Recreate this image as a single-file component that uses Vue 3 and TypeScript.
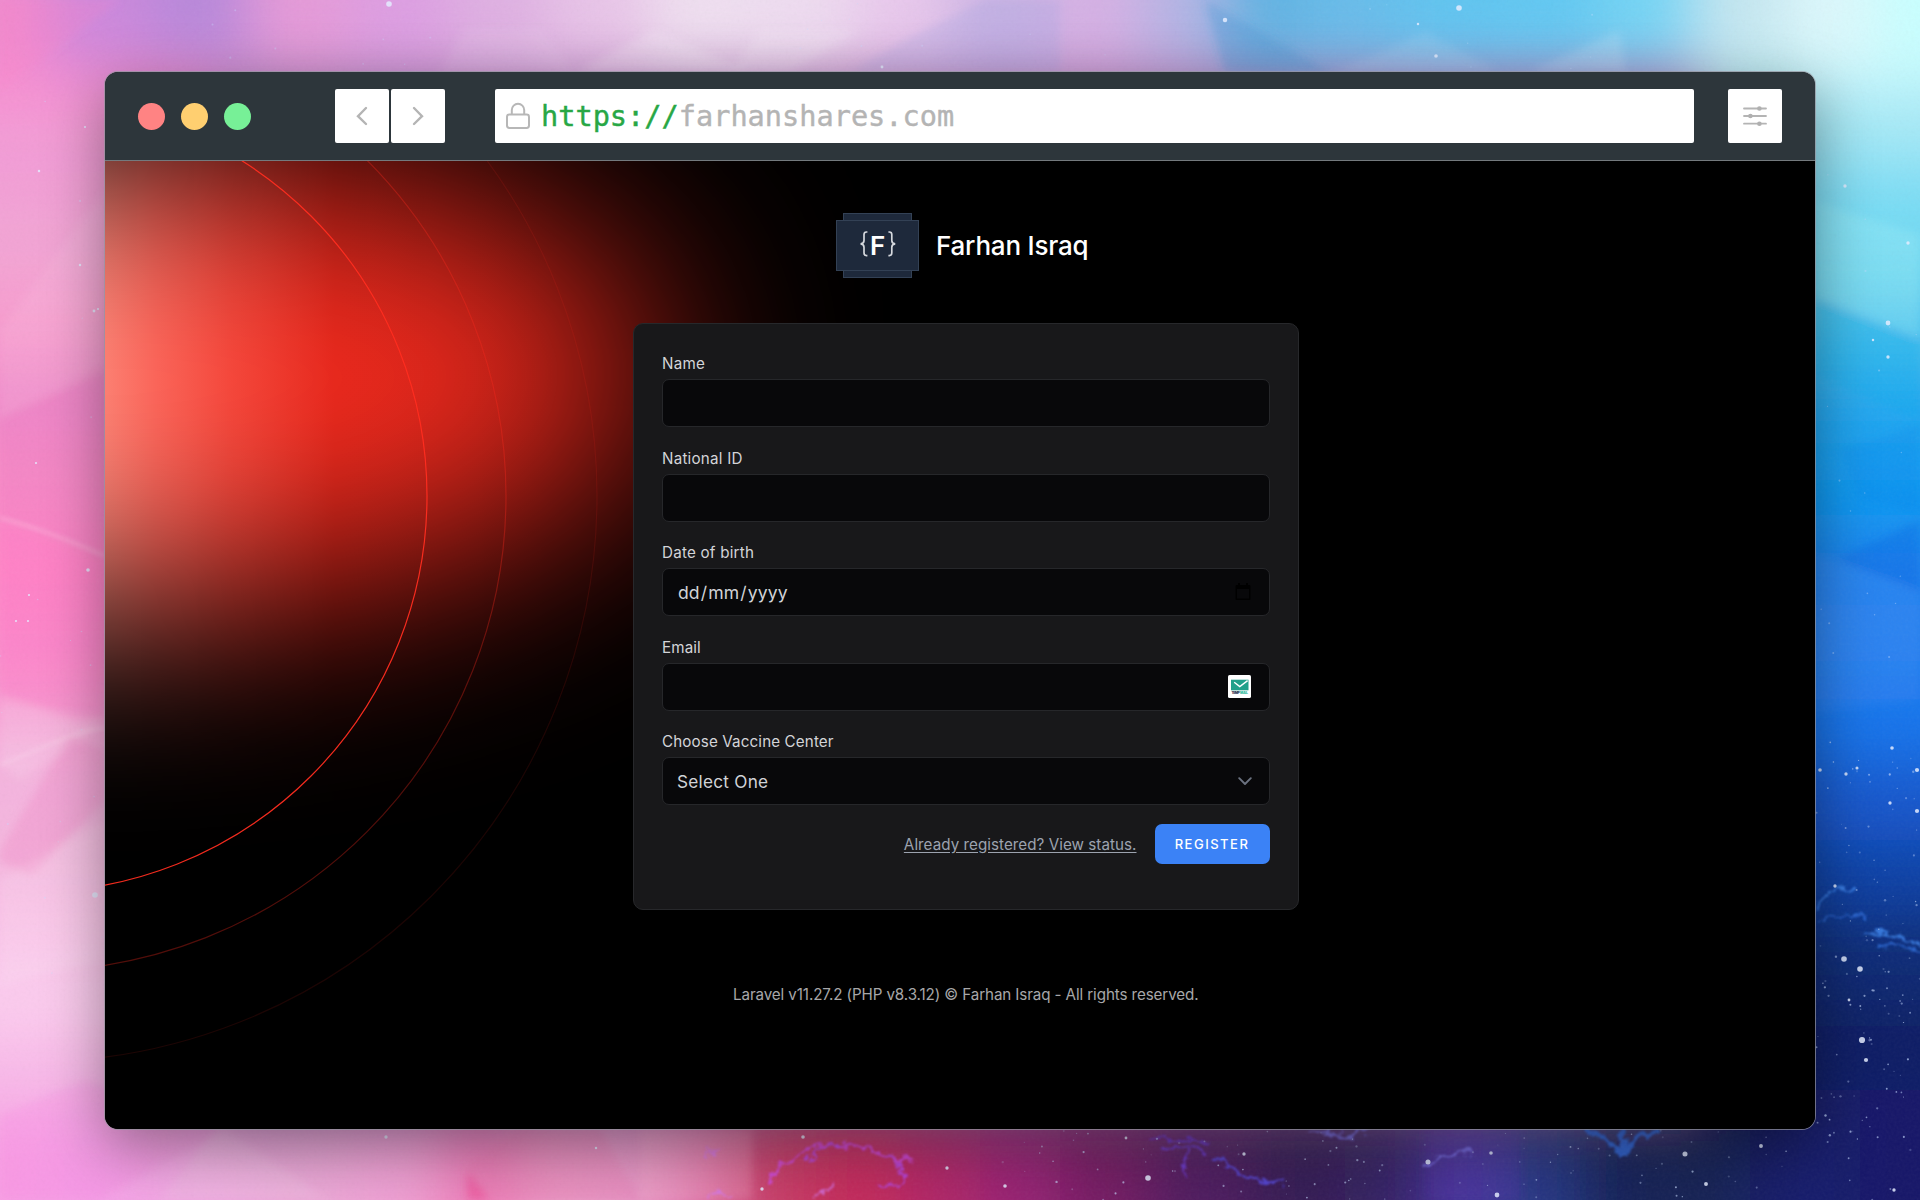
<script setup lang="ts">
interface Patch { x: number; y: number; w: number; h: number; c: string }
type Stop = [number, string]

const topStops: Stop[] = [
  [0, '#f08ace'], [100, '#cc88dc'], [200, '#b888da'], [300, '#e59ad8'], [400, '#dd9ee2'], [500, '#dfb0e2'],
  [600, '#e8c4e8'], [700, '#efdff0'], [800, '#eedcf0'], [900, '#e8c8ec'], [1000, '#ccb4e4'], [1100, '#d6b0e4'],
  [1180, '#b4b4e4'], [1260, '#62b2e2'], [1350, '#68bcea'], [1450, '#60c4f0'], [1550, '#62c8f2'],
  [1650, '#74d4f4'], [1740, '#c4e6f0'], [1830, '#dcf8fc'], [1920, '#c8ffff'],
]
const bottomStops: Stop[] = [
  [0, '#f8a0e4'], [100, '#f4a0e6'], [200, '#f0a8e0'], [300, '#eca8d8'], [400, '#f0a0d4'], [480, '#ee7cb8'],
  [560, '#ec9cc8'], [640, '#e898c8'], [700, '#e070a8'], [760, '#c83c68'], [860, '#c42c5c'], [940, '#b02868'],
  [1020, '#962474'], [1100, '#741c64'], [1200, '#501c60'], [1300, '#341c54'], [1390, '#342064'],
  [1460, '#44309a'], [1540, '#283884'], [1620, '#142458'], [1700, '#142454'], [1800, '#141c6c'], [1920, '#141468'],
]
const leftStops: Stop[] = [
  [60, '#fa8cd0'], [150, '#f29cd6'], [250, '#f2a4d4'], [320, '#f89cce'], [400, '#f08aca'], [480, '#f88cc8'],
  [560, '#ff88c8'], [640, '#fd8ccc'], [700, '#f898d0'], [760, '#f4b4de'], [850, '#f4b6de'], [920, '#f9c0e6'],
  [1000, '#fcccee'], [1080, '#f8b8e8'], [1150, '#fa9ce6'], [1220, '#f8a4e4'],
]
const rightStops: Stop[] = [
  [60, '#c4f6fc'], [130, '#a4e8f6'], [200, '#78dcf4'], [280, '#6cd6f0'], [340, '#40bcee'], [420, '#1ca4f0'],
  [500, '#1098f2'], [570, '#1a80ee'], [640, '#2480ee'], [720, '#1474ec'], [800, '#1456cc'], [880, '#1040a4'],
  [950, '#102c74'], [1050, '#101c64'], [1130, '#18146c'], [1220, '#180c60'],
]

function strip(stops: Stop[], horizontal: boolean, offset: number, depth: number): Patch[] {
  return stops.map(([p, c], i) => {
    const prev = i > 0 ? (stops[i - 1][0] + p) / 2 : p - 80
    const next = i < stops.length - 1 ? (stops[i + 1][0] + p) / 2 : p + 80
    const len = next - prev + 1
    return horizontal
      ? { x: prev, y: offset, w: len, h: depth, c }
      : { x: offset, y: prev, w: depth, h: len, c }
  })
}

const patches: Patch[] = [
  ...strip(leftStops, false, -80, 300),
  ...strip(rightStops, false, 1700, 300),
  ...strip(topStops, true, -80, 150),
  ...strip(bottomStops, true, 1115, 165),
]

let seed = 20241
function rnd(): number {
  seed = (seed * 16807) % 2147483647
  return seed / 2147483647
}

interface Star { x: number; y: number; r: number; o: number }
const stars: Star[] = []
for (let i = 0; i < 110; i++) stars.push({ x: 1000 + rnd() * 920, y: 1130 + rnd() * 70, r: 0.5 + rnd() * 0.7, o: 0.2 + rnd() * 0.5 })
for (let i = 0; i < 110; i++) stars.push({ x: 1816 + rnd() * 104, y: 740 + rnd() * 400, r: 0.5 + rnd() * 0.7, o: 0.2 + rnd() * 0.5 })
for (let i = 0; i < 20; i++) stars.push({ x: 1816 + rnd() * 104, y: 100 + rnd() * 600, r: 0.6 + rnd() * 0.5, o: 0.4 })
for (let i = 0; i < 18; i++) stars.push({ x: rnd() * 103, y: 90 + rnd() * 1080, r: 0.6 + rnd() * 0.5, o: 0.4 })
for (let i = 0; i < 24; i++) stars.push({ x: 200 + rnd() * 1400, y: rnd() * 70, r: 0.6 + rnd() * 0.5, o: 0.35 })
const bright: [number, number, number][] = [
  [1459, 8, 4], [1225, 20, 3.2], [1436, 56, 2.6], [1418, 24, 1.8], [882, 67, 2], [389, 4, 4], [95, 895, 4], [88, 570, 2.6],
  [80, 265, 1.8], [94, 311, 2], [98, 309, 1.6], [85, 127, 1.6], [39, 171, 1.8], [36, 463, 1.6], [29, 595, 1.6],
  [28, 621, 1.6], [16, 621, 1.6], [386, 1137, 2.4], [596, 1148, 1.8], [1845, 186, 2.4], [1888, 323, 3.4], [1888, 357, 2.4],
  [1908, 243, 2.4], [1873, 340, 1.8], [1892, 748, 2.6], [1846, 774, 2.4], [1857, 768, 2.2], [1820, 770, 2.6],
  [1917, 770, 3], [1890, 803, 2.4], [1917, 811, 3], [1844, 959, 4], [1860, 969, 4], [1862, 1040, 4.4], [1866, 1060, 3],
  [1835, 886, 2.4], [1849, 1000, 2], [803, 1137, 2.6], [947, 1168, 2.4], [1005, 1186, 2.6], [762, 1189, 2.4],
  [1148, 1178, 4], [1244, 1154, 2.4], [1491, 1153, 2.6], [1428, 1162, 3.6], [1685, 1154, 3.6], [1761, 1146, 2.8],
  [1706, 1184, 2.8], [1497, 1195, 3.4], [1126, 1138, 2], [1894, 1190, 2.4],
]

const facets = [
  { p: '0,0 120,0 0,90', f: '#ff80c8', o: 0.2 },
  { p: '0,330 105,190 105,365 0,420', f: '#fff', o: 0.08 },
  { p: '0,415 105,372 105,560 0,518', f: '#e050b0', o: 0.12 },
  { p: '0,520 105,560 105,718 80,725 0,694', f: '#ff58b8', o: 0.14 },
  { p: '0,700 105,722 20,780 0,765', f: '#fff', o: 0.14 },
  { p: '0,850 70,735 105,750 105,800 32,876 0,862', f: '#ee70b8', o: 0.24 },
  { p: '0,880 105,820 105,960 0,985', f: '#fff', o: 0.12 },
  { p: '0,1115 85,1080 220,1128 160,1200 0,1200', f: '#fa78e0', o: 0.2 },
  { p: '225,1130 330,1200 100,1200', f: '#fff', o: 0.1 },
  { p: '467,1170 490,1200 467,1200', f: '#f04090', o: 0.5 },
  { p: '467,1165 520,1128 600,1128 640,1200 490,1200', f: '#e878b0', o: 0.3 },
  { p: '640,1128 752,1128 752,1200 640,1200', f: '#f8b0cc', o: 0.26 },
  { p: '465,28 540,28 575,72 440,72', f: '#fff', o: 0.08 },
  { p: '655,30 750,72 575,72', f: '#fff', o: 0.2 },
  { p: '860,30 790,72 730,72 760,30', f: '#fff', o: 0.16 },
  { p: '905,40 985,0 1060,0 1060,72 850,72', f: '#a0a4e0', o: 0.24 },
  { p: '1205,0 1330,72 1225,72', f: '#3a90d0', o: 0.28 },
  { p: '1425,32 1500,72 1335,72', f: '#fff', o: 0.1 },
  { p: '1620,30 1625,72 1530,72', f: '#fff', o: 0.15 },
  { p: '1816,202 1920,235 1920,338 1816,298', f: '#b8f8f8', o: 0.2 },
  { p: '1816,298 1920,338 1920,420 1816,376', f: '#08a8ec', o: 0.24 },
  { p: '1840,450 1920,425 1920,512 1860,500', f: '#0070e8', o: 0.16 },
  { p: '1816,555 1920,592 1920,700 1816,712', f: '#68a0ff', o: 0.12 },
  { p: '1836,560 1920,520 1920,592', f: '#0450d8', o: 0.24 },
  { p: '1425,1128 1520,1128 1520,1200 1425,1200', f: '#6a40c0', o: 0.16 },
]

const wisps = [
  { d: 'M770 1186 C776 1164 800 1150 820 1146 S856 1146 880 1154 S912 1158 914 1160', c: '#d24cf0', w: 3 },
  { d: 'M806 1165 C812 1152 822 1146 838 1144 M888 1156 C896 1160 908 1170 902 1184 C898 1188 888 1184 880 1182', c: '#b84af4', w: 2.4 },
  { d: 'M708 1160 C706 1153 714 1150 720 1148 M708 1197 C716 1188 728 1194 734 1196 M816 1200 C822 1190 830 1188 834 1184', c: '#d678f0', w: 2 },
  { d: 'M1162 1152 C1180 1146 1196 1148 1206 1154 M1186 1150 C1188 1162 1180 1170 1184 1178 M1150 1136 C1166 1142 1190 1136 1210 1142', c: '#7040e0', w: 2.6 },
  { d: 'M1214 1160 C1230 1162 1232 1172 1244 1176 S1266 1180 1280 1184', c: '#5b50f4', w: 3 },
  { d: 'M1310 1130 C1330 1132 1340 1140 1366 1130 M1424 1168 C1436 1154 1450 1156 1470 1152', c: '#8078f0', w: 3 },
  { d: 'M1586 1132 C1600 1134 1612 1140 1622 1156 C1632 1142 1640 1130 1660 1132 M1622 1130 V1150', c: '#3270e8', w: 5 },
  { d: 'M1818 906 C1826 890 1842 888 1856 888 M1864 934 C1880 932 1900 936 1920 944', c: '#4088f0', w: 2.4 },
  { d: 'M1816 922 C1830 914 1850 912 1866 918 M1880 946 C1896 940 1908 950 1920 952', c: '#3070e0', w: 2.2 },
]

const veins = ['M0 765 C40 750 70 732 105 728', 'M0 518 C40 528 72 542 105 556']

const rings = [
  { r: 396, o: 0.95 },
  { r: 475, o: 0.32 },
  { r: 566, o: 0.11 },
]
</script>

<template>
  <div class="desktop">
    <svg class="wallpaper" viewBox="0 0 1920 1200" width="1920" height="1200" aria-hidden="true">
      <defs>
        <filter id="mesh" x="-5%" y="-5%" width="110%" height="110%"><feGaussianBlur stdDeviation="28" /></filter>
        <filter id="soft"><feGaussianBlur stdDeviation="4" /></filter>
        <filter id="vein" x="-20%" y="-20%" width="140%" height="140%"><feGaussianBlur stdDeviation="2" /></filter>
        <filter id="glowy" x="-20%" y="-50%" width="140%" height="200%">
          <feTurbulence type="fractalNoise" baseFrequency="0.09" numOctaves="3" seed="4" result="n" />
          <feDisplacementMap in="SourceGraphic" in2="n" scale="16" xChannelSelector="R" yChannelSelector="G" result="d" />
          <feGaussianBlur in="d" stdDeviation="1.2" />
        </filter>
        <filter id="dot" x="-50%" y="-50%" width="200%" height="200%"><feGaussianBlur stdDeviation="0.7" /></filter>
        <filter id="grain" x="0" y="0" width="100%" height="100%">
          <feTurbulence type="fractalNoise" baseFrequency="0.35" numOctaves="2" seed="8" />
          <feColorMatrix type="saturate" values="0" />
        </filter>
      </defs>
      <rect width="1920" height="1200" fill="#c890d0" />
      <g filter="url(#mesh)">
        <rect v-for="(p, i) in patches" :key="i" :x="p.x" :y="p.y" :width="p.w" :height="p.h" :fill="p.c" />
      </g>
      <g filter="url(#soft)">
        <polygon v-for="(f, i) in facets" :key="i" :points="f.p" :fill="f.f" :fill-opacity="f.o" />
      </g>
      <g filter="url(#vein)" fill="none" stroke="#ffeaf6" stroke-width="3" stroke-opacity="0.28">
        <path v-for="d in veins" :key="d" :d="d" />
      </g>
      <g filter="url(#glowy)" fill="none" stroke-linecap="round">
        <path v-for="(w, i) in wisps" :key="i" :d="w.d" :stroke="w.c" :stroke-width="w.w" stroke-opacity="0.8" />
      </g>
      <rect width="1920" height="1200" filter="url(#grain)" opacity="0.05" />
      <g filter="url(#dot)">
        <circle v-for="(s, i) in stars" :key="i" :cx="s.x" :cy="s.y" :r="s.r" :fill-opacity="s.o" fill="#c9dcff" />
        <circle v-for="(b, i) in bright" :key="'b' + i" :cx="b[0]" :cy="b[1]" :r="b[2] * 0.7" fill="#e4ecff" fill-opacity="0.85" />
      </g>
    </svg>

    <main class="window">
      <header class="toolbar">
        <div class="lights"><i class="red"></i><i class="amber"></i><i class="green"></i></div>
        <div class="nav">
          <button type="button" aria-label="Back">
            <svg width="54" height="54" viewBox="0 0 54 54"><path d="M31 19 L23 27.2 L31 35" /></svg>
          </button>
          <button type="button" aria-label="Forward">
            <svg width="54" height="54" viewBox="0 0 54 54"><path d="M23 19 L31 27.2 L23 35" /></svg>
          </button>
        </div>
        <div class="address">
          <svg width="26" height="28" viewBox="0 0 26 28">
            <rect x="2" y="12.6" width="22" height="13.4" rx="2.4" />
            <path d="M6.8 12.6 V8 a6.2 6.2 0 0 1 12.4 0 V12.6" />
          </svg>
          <span class="url"><b>https://</b>farhanshares.com</span>
        </div>
        <button class="settings" type="button" aria-label="Settings">
          <svg width="54" height="54" viewBox="0 0 54 54">
            <path d="M16 19.5 H38 M16 27 H38 M16 34.7 H38" />
            <circle cx="31.4" cy="19.5" r="2.3" /><circle cx="22.4" cy="27" r="2.3" /><circle cx="31.4" cy="34.7" r="2.3" />
          </svg>
        </button>
      </header>

      <section class="page">
        <svg class="aurora" width="800" height="968" viewBox="105 161 800 968" aria-hidden="true">
          <defs>
            <linearGradient id="heat" gradientUnits="userSpaceOnUse" x1="90" y1="0" x2="560" y2="0">
              <stop offset="0" stop-color="#ff887a" />
              <stop offset="0.14" stop-color="#fd665a" />
              <stop offset="0.3" stop-color="#f8483c" />
              <stop offset="0.52" stop-color="#ee2a1e" />
              <stop offset="1" stop-color="#ec281c" />
            </linearGradient>
            <filter id="haze" filterUnits="userSpaceOnUse" x="-900" y="-400" width="2200" height="1700">
              <feGaussianBlur stdDeviation="104 102" />
            </filter>
            <mask id="cloud" maskUnits="userSpaceOnUse" x="0" y="100" width="1100" height="1100" style="mask-type: alpha">
              <ellipse cx="110" cy="382" rx="545" ry="228" fill="#fff" filter="url(#haze)" transform="rotate(-1 110 382)" />
            </mask>
          </defs>
          <rect x="100" y="150" width="950" height="1000" fill="url(#heat)" mask="url(#cloud)" />
          <circle v-for="ring in rings" :key="ring.r" cx="31" cy="496" :r="ring.r" fill="none" stroke="#ff2d20" stroke-width="1.2" :stroke-opacity="ring.o" />
        </svg>

        <div class="column">
          <div class="brand">
            <svg width="84" height="66" viewBox="0 0 84 66">
              <rect x="7.5" y="0.5" width="68" height="64" fill="#1e293b" stroke="#334155" />
              <rect x="0.5" y="7.5" width="82" height="50" fill="#1e293b" stroke="#334155" />
              <g fill="none" stroke="#d5d8dd" stroke-width="1.7">
                <path d="M31.4 19 H30.4 Q28 19 28 21.6 V27.4 Q28 30.4 24.6 30.8 Q28 31.2 28 34.2 V40 Q28 42.6 30.4 42.6 H31.4" />
                <path d="M52.4 19 H53.4 Q55.8 19 55.8 21.6 V27.4 Q55.8 30.4 59.2 30.8 Q55.8 31.2 55.8 34.2 V40 Q55.8 42.6 53.4 42.6 H52.4" />
              </g>
              <text x="34" y="42" class="mark">F</text>
            </svg>
            <h1>Farhan Israq</h1>
          </div>

          <form class="card" @submit.prevent>
            <div class="row"><label class="l-short">Name</label><div class="field"></div></div>
            <div class="row"><label class="l-short">National ID</label><div class="field"></div></div>
            <div class="row">
              <label class="l-short">Date of birth</label>
              <div class="field">
                <span class="date">dd<em>/</em>mm<em>/</em>yyyy</span>
                <svg class="calendar" width="16" height="18" viewBox="0 0 16 18">
                  <path fill="#000" fill-rule="evenodd" d="M3 0h2v2h6V0h2v2h1.4Q15.5 2 15.5 3.4V16Q15.5 17 14.4 17H1.6Q.5 17 .5 16V3.4Q.5 2 1.6 2H3zM2 6V15.4H14V6z" />
                </svg>
              </div>
            </div>
            <div class="row">
              <label>Email</label>
              <div class="field">
                <svg class="tempmail" width="23" height="23" viewBox="0 0 23 23">
                  <rect width="23" height="23" rx="1.6" fill="#fff" />
                  <rect x="3" y="4.7" width="17.5" height="10.6" fill="#22a08a" />
                  <path d="M6.2 7.2 L11.8 11.6 L19.6 5.6" fill="none" stroke="#fff" stroke-width="1.4" />
                  <text x="3.4" y="18.6" class="tiny" textLength="8.4" fill="#1b2a4a">TEMP</text>
                  <text x="12" y="18.6" class="tiny" textLength="8" fill="#22b89a">MAIL</text>
                </svg>
              </div>
            </div>
            <div class="row">
              <label>Choose Vaccine Center</label>
              <div class="field">
                <span class="select">Select One</span>
                <svg class="chevron" width="14" height="9" viewBox="0 0 14 9"><path d="M1.2 1.2 L7 7 L12.8 1.2" /></svg>
              </div>
            </div>
            <div class="actions">
              <a>Already registered? View status.</a>
              <button class="register" type="submit">REGISTER</button>
            </div>
          </form>

          <footer><span>Laravel v11.27.2 (PHP v8.3.12) © Farhan Israq - All rights reserved.</span></footer>
        </div>
      </section>
    </main>
  </div>
</template>

<style>
body {
  margin: 0;
  overflow: hidden;
}
</style>

<style scoped>
.desktop {
  box-sizing: border-box;
  position: relative;
  width: 1920px;
  height: 1200px;
  padding: 71px 104px 0;
  overflow: hidden;
  font-family: Inter, "Liberation Sans", sans-serif;
}
.wallpaper {
  position: absolute;
  inset: 0;
}
.window {
  position: relative;
  box-sizing: border-box;
  height: 1059px;
  border: 1px solid rgba(150, 150, 160, 0.7);
  border-radius: 14px;
  overflow: hidden;
  background: #000;
  background-clip: padding-box;
  box-shadow: 0 18px 60px rgba(0, 0, 0, 0.4);
}
.toolbar {
  box-sizing: border-box;
  display: flex;
  align-items: center;
  height: 89px;
  padding: 0 33px;
  border-bottom: 1px solid #747a7e;
  background: #2d363b;
}
button {
  border: 0;
  padding: 0;
  font: inherit;
}
.lights {
  display: flex;
  gap: 15.8px;
  width: 197px;
}
.lights i {
  width: 27px;
  height: 27px;
  border-radius: 50%;
}
.red { background: #ff8383; }
.amber { background: #ffcf70; }
.green { background: #77f097; }
.nav {
  display: flex;
  gap: 2px;
  margin-right: 50px;
}
.nav button,
.settings {
  display: block;
  width: 54px;
  height: 54px;
  border-radius: 2px;
  background: #fff;
}
.nav svg,
.settings svg {
  display: block;
}
.nav path {
  fill: none;
  stroke: #b4b4b4;
  stroke-width: 2.4;
  stroke-linecap: round;
}
.address {
  box-sizing: border-box;
  display: flex;
  align-items: center;
  flex: 1;
  height: 54px;
  margin-right: 34px;
  padding-left: 10px;
  border-radius: 2px;
  background: #fff;
}
.address svg {
  fill: none;
  stroke: #b7b7b7;
  stroke-width: 2;
}
.url {
  margin-left: 10px;
  color: #b4b4b4;
  font: 28.6px/54px "DejaVu Sans Mono", monospace;
  -webkit-text-stroke: 0.4px currentColor;
}
.url b {
  color: #28a745;
  font-weight: 400;
}
.settings path {
  stroke: #b4b4b4;
  stroke-width: 1.8;
  stroke-linecap: round;
}
.settings circle {
  fill: #b0b0b0;
}
.page {
  position: relative;
  height: 968px;
  background: #000;
}
.aurora {
  position: absolute;
  top: 0;
  left: 0;
}
.column {
  position: relative;
  display: flex;
  flex-direction: column;
  width: 665.5px;
  margin-left: 528px;
  padding-top: 52px;
}
.brand {
  display: flex;
  align-items: center;
  gap: 16px;
  height: 66px;
  margin-left: 203px;
}
.mark {
  fill: #fff;
  font-size: 26px;
  font-weight: 600;
}
.tiny {
  font-size: 3.4px;
  font-weight: 800;
}
h1 {
  margin: 0;
  color: #fff;
  font-size: 26px;
  font-weight: 500;
  letter-spacing: -0.2px;
  line-height: 66px;
  white-space: nowrap;
}
.card {
  box-sizing: border-box;
  height: 587px;
  margin-top: 44px;
  padding: 27px 28px 0;
  border: 1px solid #27282b;
  border-radius: 10px;
  background: #18181a;
}
.row {
  height: 94.5px;
}
label {
  display: block;
  height: 28px;
  color: #d3d4d8;
  font-size: 15.2px;
  letter-spacing: 0.12px;
  line-height: 25px;
  white-space: nowrap;
}
.l-short {
  letter-spacing: 0.22px;
}
.field {
  box-sizing: border-box;
  display: flex;
  align-items: center;
  justify-content: space-between;
  height: 48px;
  padding: 0 18px 0 14px;
  border: 1px solid #26272a;
  border-radius: 7px;
  background: #08080a;
  color: #d1d3d7;
  font-size: 17.2px;
}
.date {
  margin-left: 1px;
  font-size: 17.6px;
  letter-spacing: 0.1px;
}
.date em {
  margin: 0 1px;
  font-style: normal;
}
.select {
  letter-spacing: 0.25px;
}
.calendar,
.tempmail {
  margin-left: auto;
}
.chevron {
  margin-left: auto;
  margin-right: -1px;
}
.chevron path {
  fill: none;
  stroke: #6b7280;
  stroke-width: 1.9;
  stroke-linecap: round;
  stroke-linejoin: round;
}
.actions {
  display: flex;
  align-items: center;
  justify-content: flex-end;
  gap: 18px;
  height: 41px;
}
.actions a {
  color: #9ca3af;
  font-size: 15.2px;
  letter-spacing: 0.04px;
  text-decoration: underline;
  text-underline-offset: 2px;
  white-space: nowrap;
}
.register {
  width: 115px;
  height: 39.5px;
  border-radius: 7px;
  background: #3b82f6;
  color: #fff;
  font-size: 13px;
  font-weight: 500;
  letter-spacing: 1.5px;
}
footer {
  margin-top: 72px;
  color: #a7a7a9;
  font-size: 15.2px;
  letter-spacing: -0.11px;
  line-height: 26px;
  text-align: center;
  white-space: nowrap;
}
</style>
